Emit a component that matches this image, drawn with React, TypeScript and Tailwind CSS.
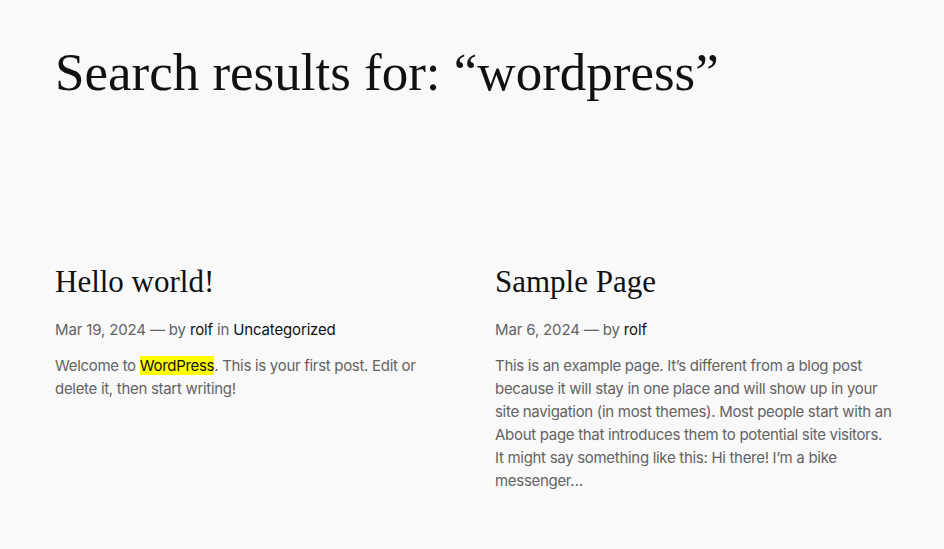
import React from "react";

const serif = { fontFamily: '"Liberation Serif", "DejaVu Serif", serif' };

export default function App() {
  return (
    <div className="min-h-[549px] bg-[#f9f9f9] text-[#111111]" style={{ fontFamily: 'Inter, "Noto Sans", sans-serif' }}>
      <div className="pl-[55px] pr-[51px] pt-[41px]">
        <h1 className="text-[53px] leading-[1.2] font-normal" style={serif}>
          Search results for: “wordpress”
        </h1>
        <div className="mt-[158px] grid grid-cols-[394px_1fr] gap-[46px]">
          <article>
            <h2 className="text-[31px] leading-[1.2] font-normal" style={serif}>Hello world!</h2>
            <div className="mt-[19px] text-[15px] leading-[1.5] tracking-[-0.15px] text-[#636363]">
              Mar 19, 2024 — by <span className="text-[#111111]">rolf</span> in <span className="text-[#111111]">Uncategorized</span>
            </div>
            <p className="mt-[13px] text-[15px] leading-[23px] tracking-[-0.3px] text-[#636363]">
              Welcome to <mark className="bg-[#ffff00] text-[#111111]">WordPress</mark>. This is your first post. Edit or delete it, then start writing!
            </p>
          </article>
          <article>
            <h2 className="text-[31px] leading-[1.2] font-normal" style={serif}>Sample Page</h2>
            <div className="mt-[19px] text-[15px] leading-[1.5] tracking-[-0.15px] text-[#636363]">
              Mar 6, 2024 — by <span className="text-[#111111]">rolf</span>
            </div>
            <p className="mt-[13px] text-[15px] leading-[23px] tracking-[-0.3px] text-[#636363]">
              This is an example page. It’s different from a blog post because it will stay in one place and will show up in your site navigation (in most themes). Most people start with an About page that introduces them to potential site visitors. It might say something like this: Hi there! I’m a bike messenger…
            </p>
          </article>
        </div>
      </div>
    </div>
  );
}
